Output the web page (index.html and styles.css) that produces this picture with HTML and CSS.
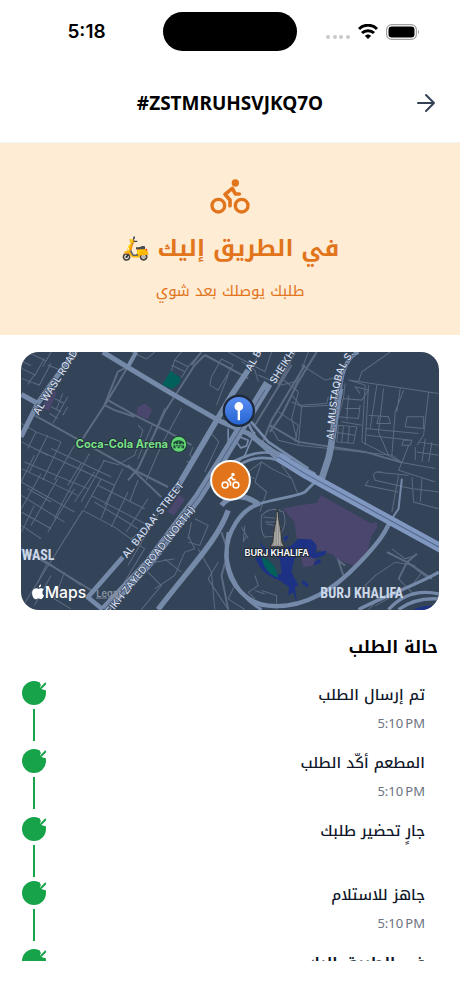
FILE: index.html
```html
<!DOCTYPE html>
<html lang="ar" dir="rtl">
<head>
    <meta charset="UTF-8">
    <meta name="viewport" content="width=device-width, initial-scale=1.0">
    <title>#ZSTMRUHSVJKQ7O</title>
    <link rel="stylesheet" href="styles.css">
</head>
<body>
    <svg class="defs" aria-hidden="true">
        <symbol id="bike" viewBox="330 40 120 105">
            <g fill="none" stroke="currentColor" stroke-width="10" stroke-linecap="round" stroke-linejoin="round">
                <circle cx="355" cy="120" r="19"/>
                <circle cx="425" cy="120" r="19"/>
                <path d="M390 120V103L375 86L397 68L406 85H418" stroke-width="11"/>
            </g>
            <circle cx="406" cy="52" r="11" fill="currentColor"/>
        </symbol>
        <symbol id="check" viewBox="0 0 24 24">
            <circle cx="12" cy="12" r="12" fill="#16a34a"/>
            <path d="M18 -1C18 2 18 3 19 4L18 6L20 8C21 9 23 9 25 9V-1Z" fill="#fff"/>
            <path d="M19 7L24 2" stroke="#16a34a" stroke-width="2"/>
        </symbol>
    </svg>

    <div class="status-bar" dir="ltr">
        <span class="clock">5:18</span>
        <span class="island"></span>
        <div class="status-icons">
            <svg width="24" height="6" viewBox="0 0 24 6" fill="#c9c9c9">
                <circle cx="2" cy="3" r="2"/><circle cx="9" cy="3" r="2"/><circle cx="15" cy="3" r="2"/><circle cx="22" cy="3" r="2"/>
            </svg>
            <svg class="wifi" width="20" height="15" viewBox="0 0 20 15" fill="none" stroke="#000" stroke-width="3">
                <path d="M1 5C6 0 14 0 19 5"/>
                <path d="M4 9C7 6 13 6 16 9"/>
                <path d="M10 15L7 12C8 10 12 10 13 12Z" fill="#000" stroke="none"/>
            </svg>
            <svg width="34" height="16" viewBox="0 0 34 16">
                <rect x=".6" y=".6" width="29.800" height="14.800" rx="5" fill="none" stroke="#a0a0a0" stroke-width="1.200"/>
                <rect x="2.500" y="2.500" width="26" height="11" rx="3.200"/>
                <path d="M32 5.500Q34 8 32 10.500Z" fill="#a0a0a0"/>
            </svg>
        </div>
    </div>

    <header class="header">
        <button class="back" aria-label="رجوع">
            <svg width="20" height="20" viewBox="0 0 20 20" fill="none" stroke="#334155" stroke-width="2" stroke-linecap="round" stroke-linejoin="round">
                <path d="M2 10H18M10 2L18 10L10 18"/>
            </svg>
        </button>
        <h1 dir="ltr">#ZSTMRUHSVJKQ7O</h1>
    </header>

    <main class="content">
        <section class="hero">
            <svg class="hero-icon"><use href="#bike"/></svg>
            <h2>في الطريق إليك 🛵</h2>
            <p>طلبك يوصلك بعد شوي</p>
        </section>

        <div class="map">
            <svg viewBox="20 21 1251 771" direction="ltr">
                <defs>
                    <linearGradient id="pin" x1="0" y1="0" x2="0" y2="1">
                        <stop offset="0" stop-color="#5b8ff5"/><stop offset="1" stop-color="#2463cf"/>
                    </linearGradient>
                    <path id="mustaqbal" d="M955 284C962 210 968 130 985 80Q1000 45 1035 5"/>
                </defs>
                <rect x="0" y="0" width="1300" height="820" fill="#334358"/>

                <!-- parks, malls, water -->
                <path d="M467 78L498 98L494 115L472 132L442 120Z" fill="#02605a"/>
                <g fill="#4a466e">
                    <path d="M368 186L390 175L413 193L400 223L366 208Z"/>
                    <path d="M102 137L127 140L104 196L82 190Z"/>
                    <path d="M493 448L511 462L478 510L459 500Z"/>
                    <path d="M803 490L840 482L905 472L918 450L1068 534L1085 530L1086 548L1070 570L1057 615L1022 663L962 640L955 628L905 612L880 590L845 578L838 530Z"/>
                    <path d="M855 625L903 635L895 660L865 665Z"/>
                </g>
                <g fill="#1e3285">
                    <path d="M735 582Q742 618 790 615L830 600L850 580L890 582L905 600L902 622L935 615L930 628L900 640L860 625L838 640L830 680L850 720L840 725L846 772L835 740L820 750L822 725L795 705C750 690 735 670 722 640L735 625C755 680 790 690 800 685L795 640L760 622Q735 610 735 582Z"/>
                    <path d="M865 703L883 720L875 725L860 712ZM900 648L915 640L918 652L895 660ZM805 576L822 568L812 590Z"/>
                    <path d="M1195 792Q1225 776 1271 782V800H1195Z"/>
                </g>
                <path d="M740 635Q780 645 790 696Q750 685 740 635Z" fill="#02605a"/>

                <!-- side streets -->
                <g class="street">
                    <path d="M21 70L62 90L90 40M40 21L95 48M60 90L40 118M21 100L75 120L110 55M110 21L85 65M21 48L50 62M100 60L150 80"/>
                    <path d="M160 155L115 235M145 145L125 195M120 160L150 175M110 185L140 200M105 205L130 220M160 185L145 210"/>
                    <path d="M480 45L520 65L500 98M500 21L480 45L470 78M520 65L560 21M470 60L510 80"/>
                    <path d="M350 21L395 42L420 21M655 60L620 42L590 95L585 120L610 135L655 60M640 90L605 180"/>
                    <path d="M370 240L385 255L360 330L310 358L265 345M415 235L370 340M450 190L400 310M500 190L440 300L395 405M380 285L440 310"/>
                    <path d="M590 265L612 290L570 380M535 305L525 330L540 345L515 350M585 270L550 330"/>
                    <path d="M21 235L65 260L40 310M21 290L100 330M65 260L140 290M100 270L45 380M140 290L85 405M180 300L120 405M30 350L220 430M60 310L300 420M225 325L150 460M270 345L200 470M325 370L270 480M21 370L190 450M110 310L290 395M60 330L20 410M200 355L160 420M240 380L180 470"/>
                    <path d="M21 410L180 500M21 450L150 530M80 385L21 490M130 400L50 540M180 430L100 560M21 500L110 550M21 540L80 580M60 480L21 560M150 460L120 520M40 430L110 470"/>
                    <path d="M205 495L20 790M205 495L300 545L390 610M230 450L400 540L350 580M260 400L210 490M300 420L260 520M340 440L290 545M400 460L335 560M250 420L390 490M240 470L370 550M370 405L345 470"/>
                    <path d="M20 610L100 650L200 720M110 690L60 780M150 680L120 760L170 790M100 650L70 710"/>
                    <path d="M390 610L280 792M440 490L340 660M520 570L540 610L510 620L480 690L420 730M540 520L580 540L555 600L520 590M530 530L520 580M450 640L500 680M400 680L440 720L380 792M550 610L590 680L600 792M610 650L580 700L640 792M360 700L420 650L480 640"/>
                    <path d="M680 50L720 75L730 110M740 21L710 60M770 21L750 80L640 21M730 90L800 120L840 110M800 100L850 140M880 21L830 150L855 180L935 175L940 155M850 140L830 220L845 280"/>
                    <path d="M860 60L930 105L975 95M790 200L850 240L840 290M765 240L790 285L850 300L1130 330L1160 352L1260 370M860 180L850 300M830 170L860 185L950 180"/>
                    <path d="M1000 105L1270 145M1000 105L1050 120L1040 290M1060 120L1050 300M1085 120L1065 250M1105 130L1090 260L1120 330M1165 135L1140 200L1130 330M1155 130L1145 200M1240 140L1225 270L1205 300M1030 110L1040 80L1125 21"/>
                    <path d="M990 115L985 160L1040 165L1060 135L1020 125L1035 145M985 160L970 215L1030 220L1035 180M990 190L1035 190M980 230L1040 240M1000 150L995 225M970 240L965 290L1015 295L1025 245ZM985 240L980 292M1003 242L998 292M965 262L1020 270"/>
                    <path d="M1060 210L1120 215L1125 235L1085 235L1090 215M1050 250L1210 265M1055 270L1190 285M1175 215H1225V250L1170 245ZM1165 285L1190 285L1185 300L1160 300ZM1210 290L1270 300M1205 320L1270 330M1230 280L1220 350M1250 290L1240 350M1200 305V345M1040 290L1160 352L1150 375L1260 410M1160 352L1180 300"/>
                    <path d="M1080 380L1180 390M1100 380Q1065 375 1080 405L1190 430M1150 390L1130 500M1190 395L1195 470L1270 490M1195 430L1270 440M1220 400L1215 470M1060 405L1050 420L1150 440"/>
                    <path d="M700 380L740 350L770 370L830 400M740 350L720 410L755 440L735 500M800 360L830 400L850 450M720 400L690 390"/>
                    <path d="M740 510Q735 560 750 575L790 572Q820 540 805 500Q770 480 740 510ZM745 515L795 520M755 535L800 545M690 540L685 590L695 570M680 545L700 580M750 530H795"/>
                    <path d="M720 690L730 720L700 740L720 760M660 720L640 760L690 792M740 735L785 750V792M720 735L750 745M1060 792L1090 760L1050 720L1080 690L1140 650L1200 660M1130 610L1170 640L1200 630M1120 620L1175 650L1240 700M1175 650L1150 700L1200 750M1220 680L1190 720L1080 780"/>
                </g>
                <g class="street wide">
                    <path d="M205 280L280 165L340 65M280 165L360 210L460 260L530 300M60 210L150 260L330 360L460 425M340 65L310 80L270 180L300 195L360 215M570 30L540 60L450 200L370 370L340 405M570 30L655 75M560 21L530 60"/>
                    <path d="M635 65L700 100M840 21L790 120M830 60L720 240M870 60L770 225L740 300M905 21L850 110L800 210L765 260M20 610L110 660L240 740M340 360L440 455M990 660L970 645L985 690"/>
                    <path d="M620 560L640 620L620 690L640 792M1160 352L1050 320L850 290L765 240"/>
                    <path d="M1115 620L1175 650L1150 700M1175 650L1205 625M1175 650L1250 700"/>
                </g>

                <!-- main roads -->
                <g class="road">
                    <path d="M265 21L345 70L470 145L610 225L700 265L790 330L900 390" stroke-width="15"/>
                    <path d="M340 65L365 21" stroke-width="12"/>
                    <path d="M21 148L70 175L20 275M70 175L115 110L190 10" stroke-width="15"/>
                    <path d="M700 75L650 150L500 405L485 430" stroke-width="17"/>
                    <path d="M325 635L220 755L265 792" stroke-width="14"/>
                    <path d="M760 115L620 345L550 455L400 655L270 792" stroke-width="28"/>
                    <path d="M700 220L760 290L880 370M690 215C720 260 700 290 830 340M680 250L790 345M800 330C740 310 700 330 650 350M790 345C700 320 670 370 630 380" stroke-width="8"/>
                    <path d="M665 290L675 275L700 285L695 302L678 308ZM640 250L640 330M720 260L690 330L650 370" stroke-width="5"/>
                    <path d="M975 130C955 230 955 280 940 340L920 400" stroke-width="20"/>
                    <path d="M1030 21Q985 40 975 130" stroke-width="12"/>
                    <path d="M640 495C610 580 540 650 430 792M620 480Q660 430 730 475" stroke-width="16"/>
                    <path d="M735 475C680 490 630 560 635 640S700 775 760 780C850 790 940 750 1030 655S1110 550 1130 520" stroke-width="13"/>
                    <path d="M735 475C780 460 840 455 870 440L905 405M640 560C620 660 665 750 740 792" stroke-width="9"/>
                    <path d="M1030 792C1110 750 1200 720 1271 680M1120 792Q1180 725 1271 745M1150 792Q1200 755 1271 760" stroke-width="10"/>
                    <path d="M1130 520L1150 490L1160 400" stroke-width="6"/>
                </g>
                <path class="highway" d="M790 335L870 385L1280 610"/>
                <path class="highway-line" d="M790 335L870 385L1280 610M750 135L620 345L550 455L400 655L270 792"/>

                <!-- labels -->
                <g class="road-name">
                    <text transform="translate(72 212) rotate(-58)">AL WASL ROAD</text>
                    <text transform="translate(708 80) rotate(-60)">AL B</text>
                    <text transform="translate(780 118) rotate(-57)">SHEIKH</text>
                    <text transform="translate(337 640) rotate(-52)">AL BADAA' STREET</text>
                    <text transform="translate(288 808) rotate(-51)">EIKH ZAYED ROAD (NORTH)</text>
                    <text><textPath href="#mustaqbal">AL MUSTAQBAL S.</textPath></text>
                </g>
                <text class="district" x="22" y="645">WASL</text>
                <text class="district" x="916" y="757">BURJ KHALIFA</text>
                <g transform="translate(492 297)">
                    <circle r="24" fill="#62d673" stroke="#1f3b36" stroke-width="3"/>
                    <path d="M-16 -6Q0 -18 16 -6V0H-16ZM-16 3H16V12H8V6H3V12H-3V6H-8V12H-16Z" fill="#1f4a3a"/>
                    <path d="M-10 -4V10M0 -8V8M10 -4V10" stroke="#62d673" stroke-width="2"/>
                </g>
                <text class="arena" x="184" y="308">Coca-Cola Arena</text>
                <g stroke="#343434" stroke-width="3">
                    <path d="M787 488L791 520L797 550L801 590L809 604H765L773 590L778 550L784 520Z" fill="#92918f"/>
                    <path d="M787 500V598M780 560V600M794 560V600" stroke="#c4c2bd" stroke-width="2"/>
                </g>
                <text class="tower" x="689" y="632">BURJ KHALIFA</text>

                <!-- destination and courier -->
                <circle cx="672" cy="197" r="45" fill="url(#pin)" stroke="#202a3d" stroke-width="7"/>
                <path d="M672 185V222" stroke="#fff" stroke-width="7" stroke-linecap="round"/>
                <circle cx="672" cy="184" r="13" fill="#fff"/>
                <circle cx="647" cy="405" r="58" fill="#e2741c" stroke="#fff" stroke-width="6"/>
                <use href="#bike" x="619" y="382" width="56" height="49" color="#fff"/>

                <!-- map attribution -->
                <path transform="translate(50 716)" fill="#fff" d="M23 10C24 4 27 1 30 0C31 6 27 10 23 10ZM16 12C19 12 21 14 23 14S28 11 32 12Q36 13 38 16Q33 20 34 26Q35 32 39 34Q36 43 30 45C27 45 25 43 22 43S17 46 14 45C7 44 1 31 4 20Q8 11 16 12Z" />
                <text class="brand" x="91" y="757">Maps</text>
                <text class="legal" x="245" y="753">Legal</text>
            </svg>
        </div>

        <section class="progress">
            <h3>حالة الطلب</h3>
            <ol class="steps">
                <li class="step">
                    <div class="step-text"><p>تم إرسال الطلب</p><time dir="ltr">5:10&#8239;PM</time></div>
                    <div class="track"><svg><use href="#check"/></svg><span></span></div>
                </li>
                <li class="step">
                    <div class="step-text"><p>المطعم أكّد الطلب</p><time dir="ltr">5:10&#8239;PM</time></div>
                    <div class="track"><svg><use href="#check"/></svg><span></span></div>
                </li>
                <li class="step">
                    <div class="step-text"><p>جارٍ تحضير طلبك</p></div>
                    <div class="track"><svg><use href="#check"/></svg><span></span></div>
                </li>
                <li class="step">
                    <div class="step-text"><p>جاهز للاستلام</p><time dir="ltr">5:10&#8239;PM</time></div>
                    <div class="track"><svg><use href="#check"/></svg><span></span></div>
                </li>
                <li class="step current">
                    <div class="step-text"><p>في الطريق إليك</p></div>
                    <div class="track"><svg><use href="#check"/></svg></div>
                </li>
            </ol>
        </section>
    </main>
</body>
</html>
```
FILE: styles.css
```css
* {
    box-sizing: border-box;
}
body {
    display: flex;
    flex-direction: column;
    height: 100vh;
    margin: 0;
    padding-bottom: 36px;
    background: #fff;
    color: #0f172a;
    font-family: "Noto Kufi Arabic", "Noto Sans", sans-serif;
}
h1, h2, h3, p, ol {
    margin: 0;
    padding: 0;
}
svg {
    display: block;
}
.defs {
    position: absolute;
    width: 0;
    height: 0;
}
.status-bar {
    display: grid;
    grid-template-columns: 1fr 134px 1fr;
    align-items: center;
    flex: none;
    height: 63px;
}
.clock {
    padding-left: 10px;
    text-align: center;
    color: #000;
    font: 600 19px/24px Inter, sans-serif;
}
.island {
    height: 39px;
    border-radius: 20px;
    background: #000;
}
.status-icons {
    display: flex;
    align-items: center;
    justify-content: center;
    gap: 8px;
    padding-right: 12px;
}
.status-icons svg {
    flex: none;
}
.status-icons svg:first-child {
    align-self: flex-end;
}
.header {
    display: grid;
    grid-template-columns: 24px 1fr 24px;
    align-items: center;
    flex: none;
    height: 80px;
    padding: 0 22px;
    border-bottom: 1px solid #f1f5f9;
}
.header h1 {
    text-align: center;
    color: #000;
    font: bold 19px/28px "Noto Sans", sans-serif;
}
.back {
    display: flex;
    align-items: center;
    justify-content: center;
    width: 24px;
    height: 24px;
    padding: 0;
    border: none;
    background: none;
    cursor: pointer;
}
.content {
    flex: 1;
    min-height: 0;
    overflow-y: auto;
    scrollbar-width: none;
}
.hero {
    display: flex;
    flex-direction: column;
    align-items: center;
    padding: 36px 22px 32px;
    background: #ffecd5;
    color: #e2741c;
}
.hero-icon {
    width: 40px;
    height: 35px;
}
.hero h2 {
    margin: 17px 0 12px;
    font-size: 23px;
    line-height: 36px;
}
.hero p {
    font-size: 15px;
    line-height: 24px;
}
.map {
    margin: 17px 21px 23px;
    overflow: hidden;
    border-radius: 18px;
}
.map svg {
    width: 100%;
}
.street {
    fill: none;
    stroke: #5c6b80;
    stroke-width: 3;
}
.street.wide {
    stroke-width: 6;
}
.road {
    fill: none;
    stroke: #7589a8;
    stroke-linejoin: round;
}
.highway {
    fill: none;
    stroke: #8097c0;
    stroke-width: 28;
}
.highway-line {
    fill: none;
    stroke: #52658a;
    stroke-width: 3;
}
.road-name {
    fill: #d2dced;
    stroke: #334358;
    stroke-width: 4;
    paint-order: stroke;
    font: 500 30px Inter, sans-serif;
}
.district {
    fill: #ccd8e8;
    font: bold 42px "Liberation Sans Narrow", "Roboto Condensed", "DejaVu Sans Condensed", sans-serif;
}
.arena {
    fill: #7be088;
    stroke: #1f2c38;
    stroke-width: 5;
    paint-order: stroke;
    font: 700 33px Inter, sans-serif;
}
.tower {
    fill: #fff;
    stroke: #1f2937;
    stroke-width: 6;
    paint-order: stroke;
    font: 600 27px Inter, sans-serif;
}
.brand {
    fill: #fff;
    font: 500 47px Inter, sans-serif;
}
.legal {
    fill: #8a93a1;
    font: 600 28px Inter, sans-serif;
    text-decoration: underline;
}
.progress {
    padding: 0 22px;
}
.progress h3 {
    margin-bottom: 20px;
    color: #000;
    font-size: 17px;
    line-height: 28px;
}
.steps {
    list-style: none;
}
.step {
    display: flex;
    justify-content: space-between;
}
.step-text {
    padding: 0 13px 16px 0;
}
.step-text p {
    font-size: 15px;
    font-weight: 500;
    line-height: 28px;
}
.step.current p {
    font-weight: bold;
}
.step-text time {
    display: block;
    margin-top: 4px;
    text-align: right;
    color: #6b7280;
    font: 13px/20px "Noto Sans", sans-serif;
}
.track {
    display: flex;
    flex-direction: column;
    align-items: center;
    gap: 4px;
    padding-bottom: 4px;
}
.track svg {
    width: 24px;
    height: 24px;
}
.track span {
    width: 2px;
    height: 32px;
    background: #16a34a;
}
```
